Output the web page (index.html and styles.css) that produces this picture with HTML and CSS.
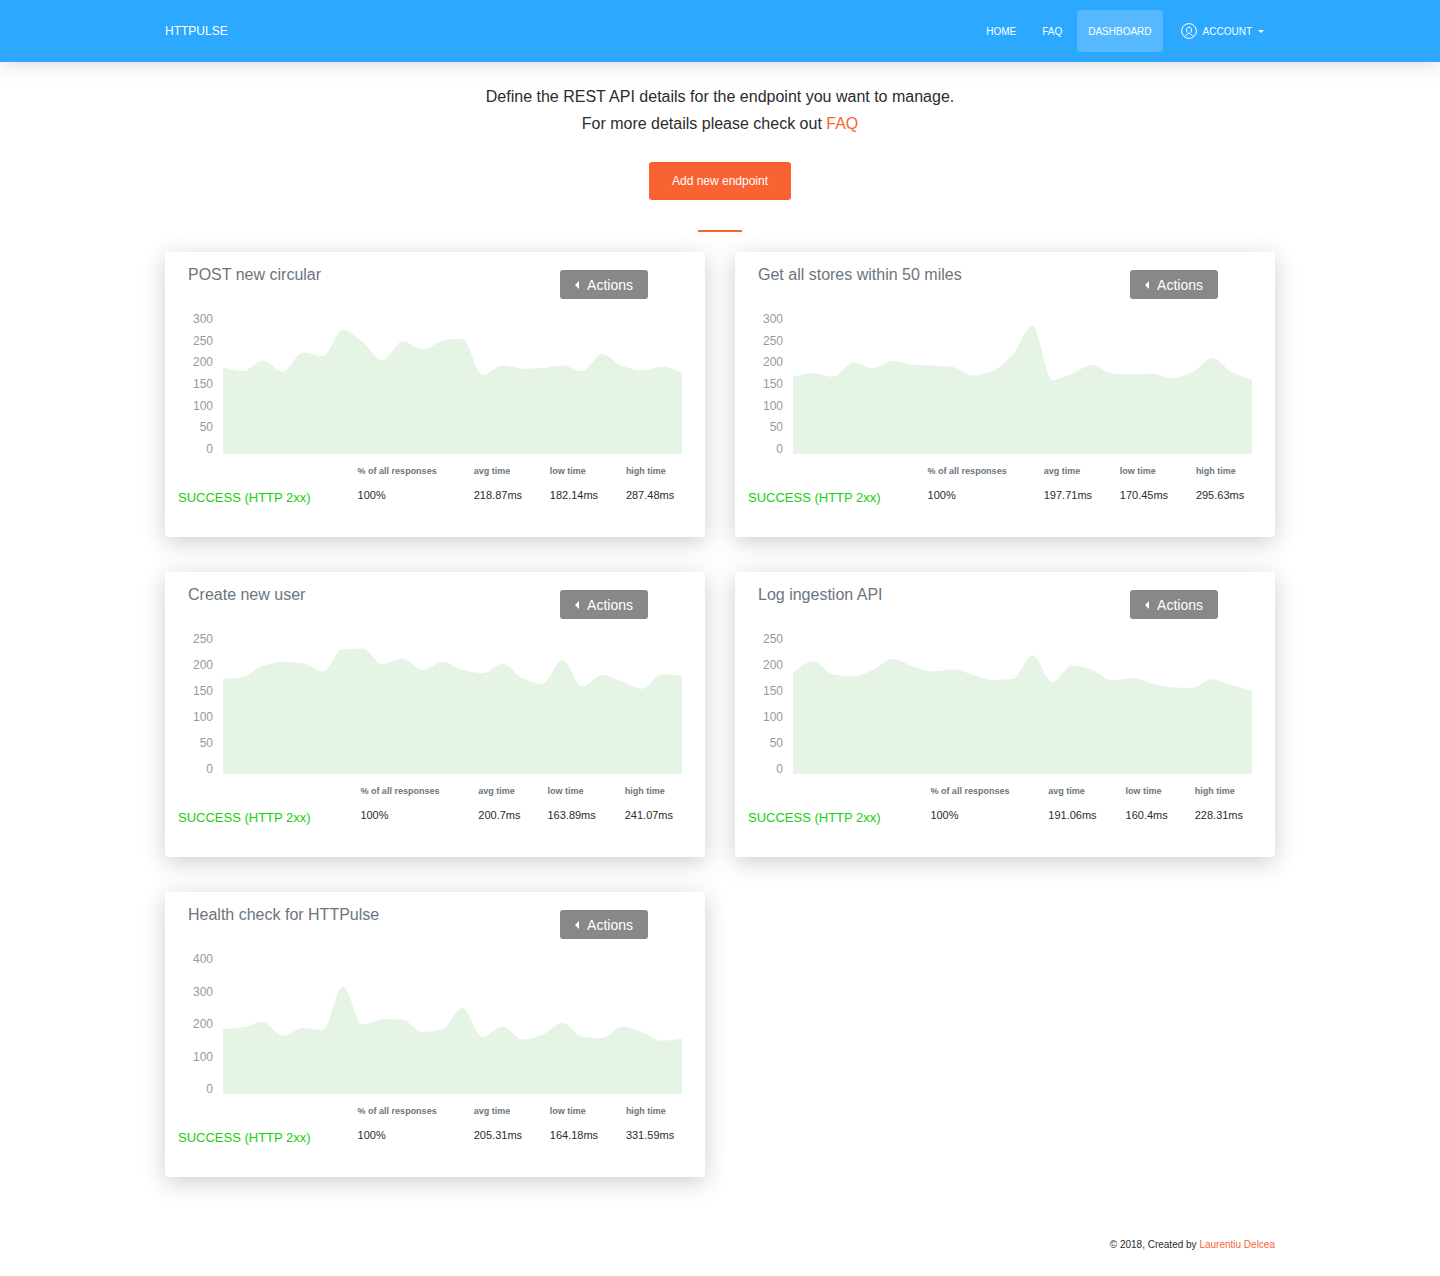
FILE: index.html
```html
<!DOCTYPE html>
<html lang="en">
<head>
  <meta charset="UTF-8">
  <title>HTTPulse - Dashboard</title>
  <meta name="viewport" content="width=device-width, initial-scale=1.0">
  <link rel="stylesheet" href="styles.css">
</head>
<body>
  <nav class="navbar">
    <div class="container navbar-inner">
      <a class="brand" href="#">HTTPULSE</a>
      <div class="nav-links">
        <a class="nav-link" href="#">HOME</a>
        <a class="nav-link" href="#faq">FAQ</a>
        <a class="nav-link active" href="#dashboard">DASHBOARD</a>
        <button class="nav-link account" type="button">
          <svg class="user-icon" viewBox="0 0 16 16" fill="none" stroke="currentColor">
            <circle cx="8" cy="8" r="7.4"/>
            <path d="M8 4.2c-1.6 0-2.5 1.1-2.5 2.7 0 1.9 1 3.6 2.5 3.6s2.5-1.7 2.5-3.6c0-1.6-.9-2.7-2.5-2.7z"/>
            <path d="M3.5 13.5c.6-1.5 2.200-1.600 3.200-2.100M12.500 13.500c-.6-1.500-2.200-1.600-3.200-2.100"/>
          </svg>
          <span>ACCOUNT</span>
          <span class="caret-down"></span>
        </button>
      </div>
    </div>
  </nav>

  <main class="container">
    <header class="intro">
      <p>Define the REST API details for the endpoint you want to manage.<br>
      For more details please check out <a href="#faq">FAQ</a></p>
      <button class="btn btn-primary" type="button">Add new endpoint</button>
      <hr class="separator">
    </header>

    <div class="cards">
      <section class="card">
        <div class="card-head">
          <h4>POST new circular</h4>
          <button class="btn btn-actions" type="button"><span class="caret-left"></span>Actions</button>
        </div>
        <div class="chart" data-max="300" data-step="50" data-values="199,191.5,215,190,234,226,287,258,216,260,241.5,261.5,266,182,205,197,198.5,205,191.5,231,203,193,201.5,188.5"></div>
        <table class="stats">
          <thead>
            <tr><td></td><th>% of all responses</th><th>avg time</th><th>low time</th><th>high time</th></tr>
          </thead>
          <tbody>
            <tr><th class="success">SUCCESS (HTTP 2xx)</th><td>100%</td><td>218.87ms</td><td>182.14ms</td><td>287.48ms</td></tr>
          </tbody>
        </table>
      </section>

      <section class="card">
        <div class="card-head">
          <h4>Get all stores within 50 miles</h4>
          <button class="btn btn-actions" type="button"><span class="caret-left"></span>Actions</button>
        </div>
        <div class="chart" data-max="300" data-step="50" data-values="178,187,178,211,198,215,206,204,201,181,191.5,228.5,295.6,171,186,206,186,184.6,185,175,188.5,221.5,188.5,171"></div>
        <table class="stats">
          <thead>
            <tr><td></td><th>% of all responses</th><th>avg time</th><th>low time</th><th>high time</th></tr>
          </thead>
          <tbody>
            <tr><th class="success">SUCCESS (HTTP 2xx)</th><td>100%</td><td>197.71ms</td><td>170.45ms</td><td>295.63ms</td></tr>
          </tbody>
        </table>
      </section>

      <section class="card">
        <div class="card-head">
          <h4>Create new user</h4>
          <button class="btn btn-actions" type="button"><span class="caret-left"></span>Actions</button>
        </div>
        <div class="chart" data-max="250" data-step="50" data-values="183,186.5,208,216,213,197.5,240.5,241,211.5,222,200,215.5,200.5,194,212,184.5,173,219,168.5,190.5,178,163.9,192,189"></div>
        <table class="stats">
          <thead>
            <tr><td></td><th>% of all responses</th><th>avg time</th><th>low time</th><th>high time</th></tr>
          </thead>
          <tbody>
            <tr><th class="success">SUCCESS (HTTP 2xx)</th><td>100%</td><td>200.7ms</td><td>163.89ms</td><td>241.07ms</td></tr>
          </tbody>
        </table>
      </section>

      <section class="card">
        <div class="card-head">
          <h4>Log ingestion API</h4>
          <button class="btn btn-actions" type="button"><span class="caret-left"></span>Actions</button>
        </div>
        <div class="chart" data-max="250" data-step="50" data-values="196,217,192,188,200,221,207,197,201.5,191,181,182.5,228.3,177,209,200,180,184,173.5,167,165.5,182,170.5,160.4"></div>
        <table class="stats">
          <thead>
            <tr><td></td><th>% of all responses</th><th>avg time</th><th>low time</th><th>high time</th></tr>
          </thead>
          <tbody>
            <tr><th class="success">SUCCESS (HTTP 2xx)</th><td>100%</td><td>191.06ms</td><td>160.4ms</td><td>228.31ms</td></tr>
          </tbody>
        </table>
      </section>

      <section class="card">
        <div class="card-head">
          <h4>Health check for HTTPulse</h4>
          <button class="btn btn-actions" type="button"><span class="caret-left"></span>Actions</button>
        </div>
        <div class="chart" data-max="400" data-step="100" data-values="199,206,221.5,178.5,203,197,331,213.5,230,228.5,191,200,265.6,175.5,207,168,182.5,218.5,176.5,172,207,191,164.2,170"></div>
        <table class="stats">
          <thead>
            <tr><td></td><th>% of all responses</th><th>avg time</th><th>low time</th><th>high time</th></tr>
          </thead>
          <tbody>
            <tr><th class="success">SUCCESS (HTTP 2xx)</th><td>100%</td><td>205.31ms</td><td>164.18ms</td><td>331.59ms</td></tr>
          </tbody>
        </table>
      </section>
    </div>
  </main>

  <footer class="container footer">
    © 2018, Created by <a href="#">Laurentiu Delcea</a>
  </footer>

  <script src="charts.js"></script>
</body>
</html>
```

FILE: styles.css
```css
:root {
  --info: #2ca8ff;
  --primary: #f96332;
  --muted: #6c757d;
}

* {
  box-sizing: border-box;
}

body {
  margin: 0;
  background: #fff;
  color: #2c2c2c;
  font-family: 'Liberation Sans', Arial, sans-serif;
  font-size: 14px;
}

a {
  color: var(--primary);
  text-decoration: none;
}

button {
  font-family: inherit;
  border: none;
  cursor: pointer;
}

.container {
  width: 100%;
  max-width: 1140px;
  margin: 0 auto;
  padding: 0 15px;
}

/* navbar */
.navbar {
  background: var(--info);
  padding: 10px 0;
  box-shadow: 0 2px 20px rgba(0, 0, 0, 0.15);
}

.navbar-inner {
  display: flex;
  justify-content: space-between;
  align-items: center;
}

.brand {
  color: #fff;
  font-size: 12px;
}

.nav-links {
  display: flex;
  gap: 4px;
}

.nav-link {
  display: flex;
  align-items: center;
  height: 42px;
  padding: 0 11px;
  border-radius: 3px;
  background: none;
  color: #fff;
  font-size: 10px;
}

.nav-link.active {
  background: rgba(255, 255, 255, 0.2);
}

.account {
  gap: 6px;
  margin-left: 3px;
}

.user-icon {
  width: 16px;
  height: 16px;
}

.caret-down {
  border: 3px solid transparent;
  border-top-color: #fff;
  border-bottom: 0;
}

.caret-left {
  border: 4px solid transparent;
  border-right-color: #fff;
  border-left: 0;
}

/* intro */
.intro {
  display: flex;
  flex-direction: column;
  align-items: center;
  padding-top: 21px;
  text-align: center;
}

.intro p {
  margin: 0 0 25px;
  font-size: 16px;
  line-height: 27px;
}

.btn {
  border-radius: 3px;
  color: #fff;
}

.btn-primary {
  height: 38px;
  padding: 0 23px;
  background: var(--primary);
  font-size: 12px;
}

.separator {
  width: 44px;
  height: 2px;
  margin: 30px 0 20px;
  border: none;
  background: var(--primary);
}

/* endpoint cards */
.cards {
  display: grid;
  grid-template-columns: repeat(2, minmax(0, 1fr));
  gap: 35px 30px;
}

.card {
  min-height: 285px;
  padding: 0 8px;
  border-radius: 3px;
  background: #fff;
  box-shadow: 0 5px 25px rgba(0, 0, 0, 0.2);
}

.card-head {
  display: flex;
  justify-content: space-between;
  align-items: flex-start;
  padding: 12px 49px 0 15px;
}

.card-head h4 {
  margin: 0;
  color: var(--muted);
  font-size: 16px;
  font-weight: normal;
  line-height: 22px;
}

.btn-actions {
  display: flex;
  align-items: center;
  gap: 8px;
  height: 29px;
  margin-top: 6px;
  padding: 0 15px;
  background: #888;
  font-size: 14px;
}

.chart {
  display: flex;
  align-items: flex-end;
  gap: 10px;
  margin: 13px 15px 0 10px;
}

.axis {
  display: flex;
  flex-direction: column;
  justify-content: space-between;
  width: 30px;
  height: 144px;
  color: #999;
  font-size: 12px;
  line-height: 14px;
  text-align: right;
}

.plot {
  flex: 1;
  min-width: 0;
  height: 130px;
  margin-bottom: 2px;
  fill: #e6f4e6;
}

.stats {
  width: 100%;
  margin-top: 6px;
  border-collapse: collapse;
  text-align: left;
}

.stats th,
.stats td {
  padding: 0 5px;
  font-size: 11px;
  vertical-align: top;
  line-height: 18px;
  white-space: nowrap;
}

.stats thead th {
  padding-bottom: 6px;
  color: var(--muted);
  font-size: 9px;
}

.stats .success {
  padding-top: 3px;
  padding-right: 0;
  color: #18ce0f;
  font-size: 13px;
  font-weight: normal;
}

.footer {
  padding-top: 61px;
  padding-bottom: 24px;
  font-size: 10px;
  line-height: 14px;
  text-align: right;
}

@media (max-width: 991px) {
  .cards {
    grid-template-columns: minmax(0, 1fr);
  }
}
```

FILE: charts.js
```js
const W = 460;
const H = 130;

// monotone cubic, so the area never goes past its own points
function smoothPath(pts) {
  const n = pts.length;
  const dx = pts[1].x - pts[0].x;
  const slopes = [];
  for (let i = 0; i < n - 1; i++) {
    slopes.push((pts[i + 1].y - pts[i].y) / dx);
  }

  const tangents = [slopes[0]];
  for (let i = 1; i < n - 1; i++) {
    const a = slopes[i - 1];
    const b = slopes[i];
    tangents.push(a * b <= 0 ? 0 : 2 * a * b / (a + b));
  }
  tangents.push(slopes[n - 2]);

  let d = `M${pts[0].x},${pts[0].y}`;
  for (let i = 0; i < n - 1; i++) {
    const p = pts[i];
    const q = pts[i + 1];
    d += `C${p.x + dx / 3},${p.y + tangents[i] * dx / 3}`;
    d += ` ${q.x - dx / 3},${q.y - tangents[i + 1] * dx / 3} ${q.x},${q.y}`;
  }
  return d;
}

document.querySelectorAll('.chart').forEach(chart => {
  const max = Number(chart.dataset.max);
  const step = Number(chart.dataset.step);
  const values = chart.dataset.values.split(',').map(Number);

  let labels = '';
  for (let v = max; v >= 0; v -= step) {
    labels += `<span>${v}</span>`;
  }

  const pts = values.map((v, i) => ({
    x: i * W / (values.length - 1),
    y: H - v / max * H
  }));

  chart.innerHTML = `
    <div class="axis">${labels}</div>
    <svg class="plot" viewBox="0 0 ${W} ${H}" preserveAspectRatio="none">
      <path d="${smoothPath(pts)}V${H}H0Z"/>
    </svg>`;
});
```
